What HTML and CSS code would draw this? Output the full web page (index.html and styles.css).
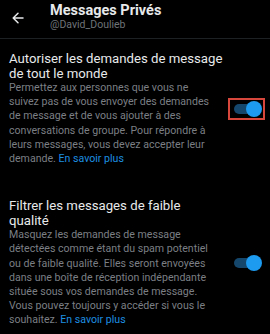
FILE: index.html
```html
<!DOCTYPE html>
<html lang="fr">
<head>
<meta charset="utf-8">
<link rel="stylesheet" href="styles.css">
</head>
<body>
<header class="topbar">
  <div class="back">
    <svg width="12" height="12" viewBox="0 0 12 12"><path d="M11 6H1.5M6 1.2L1.2 6 6 10.8" fill="none" stroke="#e7e9ea" stroke-width="1.5" stroke-linecap="round" stroke-linejoin="round"/></svg>
  </div>
  <div class="titles">
    <div class="title">Messages Privés</div>
    <div class="handle">@David_Doulieb</div>
  </div>
</header>
<main>
  <section class="setting first">
    <div class="text">
      <div class="label">Autoriser les demandes de message<br>de tout le monde</div>
      <p class="desc">Permettez aux personnes que vous ne suivez pas de vous envoyer des demandes de message et de vous ajouter à des conversations de groupe. Pour répondre à leurs messages, vous devez accepter leur demande. <span class="link">En savoir plus</span></p>
    </div>
    <div class="ctrl">
      <div class="highlight"><span class="toggle"><span class="knob"></span></span></div>
    </div>
  </section>
  <section class="setting second">
    <div class="text">
      <div class="label">Filtrer les messages de faible<br>qualité</div>
      <p class="desc">Masquez les demandes de message détectées comme étant du spam potentiel ou de faible qualité. Elles seront envoyées dans une boîte de réception indépendante située sous vos demandes de message. Vous pouvez toujours y accéder si vous le souhaitez. <span class="link">En savoir plus</span></p>
    </div>
    <div class="ctrl">
      <div class="plain"><span class="toggle"><span class="knob"></span></span></div>
    </div>
  </section>
</main>
</body>
</html>
```

FILE: styles.css
```css
html, body {
  margin: 0;
  padding: 0;
  background: #000;
}
body {
  width: 270px;
  height: 334px;
  overflow: hidden;
  font-family: "Roboto", "Liberation Sans", sans-serif;
  color: #e7e9ea;
}
.topbar {
  display: flex;
  align-items: center;
  height: 38px;
  border-bottom: 1px solid #1e2124;
}
.back {
  width: 50px;
  display: flex;
  align-items: center;
  padding-left: 12px;
  box-sizing: border-box;
  margin-top: -3px;
}
.back svg { display: block; }
.titles {
  display: flex;
  flex-direction: column;
  margin-top: -5px;
}
.title {
  font-size: 14.5px;
  font-weight: 700;
  line-height: 17px;
}
.handle {
  font-size: 10.5px;
  line-height: 12px;
  color: #6e7378;
}
.setting {
  display: flex;
  align-items: center;
  padding: 0 5px 0 9px;
}
.first { padding-top: 12px; }
.second { padding-top: 32px; }
.text {
  flex: 1;
  min-width: 0;
  padding-right: 8px;
}
.label {
  font-size: 13.2px;
  line-height: 15px;
  color: #e7e9ea;
  white-space: nowrap;
}
.desc {
  margin: 0;
  font-size: 10.6px;
  line-height: 14.2px;
  color: #7b7f84;
}
.link { color: #1d8fe0; }
.ctrl {
  width: 38px;
  display: flex;
  justify-content: center;
}
.highlight, .plain {
  width: 33px;
  height: 18px;
  display: flex;
  align-items: center;
  justify-content: center;
  border: 2px solid transparent;
}
.highlight { border-color: #d8473c; }
.toggle {
  position: relative;
  display: block;
  width: 25px;
  height: 10px;
  border-radius: 5px;
  background: #15466b;
}
.knob {
  position: absolute;
  right: -3px;
  top: -3px;
  width: 16px;
  height: 16px;
  border-radius: 50%;
  background: #1d9bf0;
}
```
